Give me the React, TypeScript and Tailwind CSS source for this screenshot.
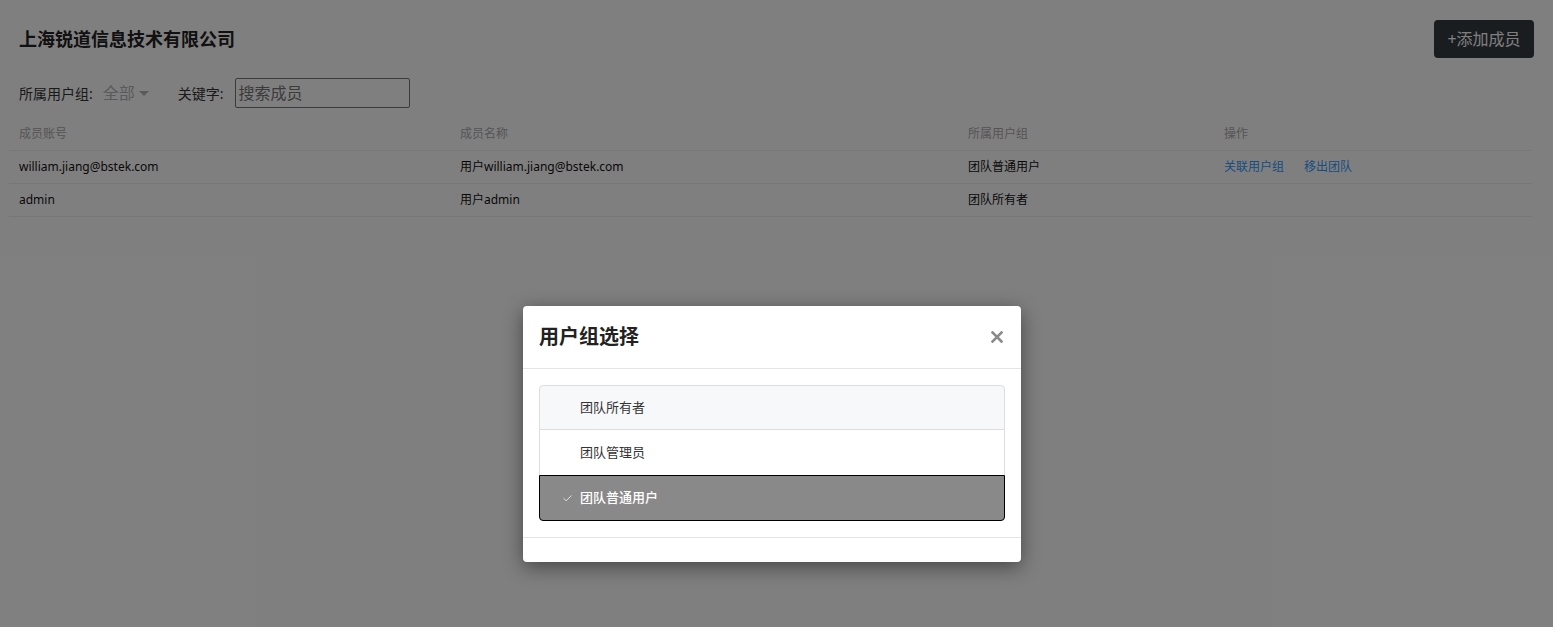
import { Check } from 'lucide-react'

const MEMBERS = [
  { account: 'william.jiang@bstek.com', name: '用户william.jiang@bstek.com', group: '团队普通用户', actions: true },
  { account: 'admin', name: '用户admin', group: '团队所有者', actions: false },
]

const GROUPS = [
  { label: '团队所有者', state: 'hover' },
  { label: '团队管理员', state: 'normal' },
  { label: '团队普通用户', state: 'selected' },
]

const FONT = "font-['Noto_Sans','Noto_Sans_CJK_SC',sans-serif]"

const ITEM_STYLE: Record<string, string> = {
  hover: 'h-[45px] bg-[#f7f8fa] text-[#333] border border-[#ddd] rounded-t-[4px]',
  normal: 'h-[45px] bg-white text-[#333] border-x border-[#ddd]',
  selected: 'h-[46px] bg-[#898989] text-white border border-black rounded-b-[4px]',
}

function MemberPage() {
  return (
    <div className="px-[9px]">
      {/* Header */}
      <div className="flex items-center justify-between px-[10px] pt-[20px] h-[58px]">
        <h1 className="text-[18px] font-semibold text-[#222] leading-none">上海锐道信息技术有限公司</h1>
        <button className="h-[38px] w-[100px] rounded-[4px] bg-[#343a40] text-white text-[16px] leading-none">+添加成员</button>
      </div>

      {/* Filters */}
      <div className="flex items-center px-[10px] mt-[20px] h-[30px]">
        <span className="text-[14px] text-[#333]">所属用户组:</span>
        <span className="ml-[10px] text-[16px] text-[#b5b5b5] flex items-center">
          全部
          <span className="ml-[4px] mt-[1px] w-0 h-0 border-x-[5px] border-x-transparent border-t-[5px] border-t-[#b5b5b5]" />
        </span>
        <span className="ml-[29px] text-[14px] text-[#333]">关键字:</span>
        <div className="ml-[11px] w-[175px] h-[30px] border border-[#767676] rounded-[2px] flex items-center px-[3px]">
          <span className="text-[16px] text-[#777]">搜索成员</span>
        </div>
      </div>

      {/* Table */}
      <div className="mt-[10px] w-[1523px] text-[12px]">
        <div className="grid grid-cols-[441px_508px_256px_1fr] h-[33px] items-center border-b border-[#eee] text-[#aaa]">
          <div className="px-[10px]">成员账号</div>
          <div className="px-[10px]">成员名称</div>
          <div className="px-[10px]">所属用户组</div>
          <div className="px-[10px]">操作</div>
        </div>
        {MEMBERS.map(m => (
          <div key={m.account} className="grid grid-cols-[441px_508px_256px_1fr] h-[33px] items-center border-b border-[#eee] text-[#111]">
            <div className="px-[10px]">{m.account}</div>
            <div className="px-[10px]">{m.name}</div>
            <div className="px-[10px]">{m.group}</div>
            <div className="px-[10px] flex gap-[20px] text-[#2f9aff]">
              {m.actions && (
                <>
                  <span>关联用户组</span>
                  <span>移出团队</span>
                </>
              )}
            </div>
          </div>
        ))}
      </div>
    </div>
  )
}

function GroupDialog() {
  return (
    <div className="w-[498px] bg-white rounded-[4px] shadow-[0_5px_20px_rgba(0,0,0,0.45)]">
      <div className="h-[63px] flex items-center justify-between px-[16px] border-b border-[#e5e5e5]">
        <h2 className="text-[20px] font-semibold text-[#222]">用户组选择</h2>
        <svg width="12" height="12" viewBox="0 0 12 12" className="mr-[2px] mt-[-1px]">
          <path d="M1.5 1.5 L10.5 10.5 M10.5 1.5 L1.5 10.5" stroke="#8a8a8a" strokeWidth="2.6" strokeLinecap="square" />
        </svg>
      </div>
      <div className="p-[16px]">
        {GROUPS.map(g => (
          <div key={g.label} className={`flex items-center ${ITEM_STYLE[g.state]}`}>
            <span className="w-[40px] flex justify-end pr-[7px]">
              {g.state === 'selected' && <Check size={11} strokeWidth={1.6} />}
            </span>
            <span className={`text-[13px] ${g.state === 'selected' ? 'font-medium' : ''}`}>{g.label}</span>
          </div>
        ))}
      </div>
      <div className="h-[25px] border-t border-[#e5e5e5]" />
    </div>
  )
}

export default function App() {
  return (
    <div className={`relative h-[627px] w-full overflow-hidden bg-white ${FONT}`}>
      <MemberPage />
      {/* Modal backdrop */}
      <div className="absolute inset-0 bg-black/50">
        <div className="ml-[523px] mt-[306px]">
          <GroupDialog />
        </div>
      </div>
    </div>
  )
}
